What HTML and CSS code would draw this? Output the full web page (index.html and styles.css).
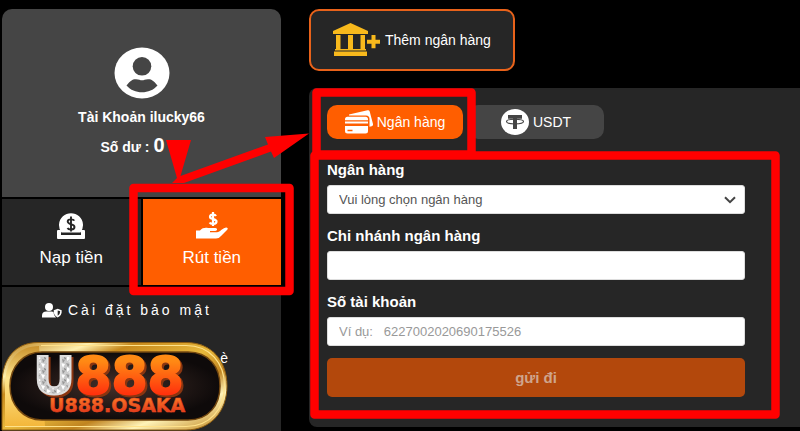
FILE: index.html
```html
<!DOCTYPE html>
<html lang="vi">
<head>
<meta charset="utf-8">
<meta name="viewport" content="width=device-width, initial-scale=1">
<title>Rút tiền</title>
<link rel="stylesheet" href="styles.css">
</head>
<body>
<div class="layout">
  <aside class="sidebar">
    <section class="profile">
      <svg class="avatar" viewBox="0 0 56 52" aria-hidden="true">
        <ellipse cx="28" cy="26" rx="27.5" ry="25.5" fill="#fff"/>
        <circle cx="28" cy="19.300" r="9.300" fill="#454545"/>
        <path d="M12.500 38.500C16.500 33.500 19 32 22 32.300C25 32.600 26 33.300 28 33.300C30 33.300 31 32.600 34 32.300C37 32 39.500 33.500 43.500 38.500C39.500 43 34 45.300 28 45.300C22 45.300 16.500 43 12.500 38.500Z" fill="#454545"/>
      </svg>
      <p class="account">Tài Khoản ilucky66</p>
      <p class="balance">Số dư : <span class="amount">0</span></p>
    </section>
    <nav class="actions">
      <a class="action" href="#nap">
        <svg class="action-icon" viewBox="0 0 32 28" aria-hidden="true">
          <path d="M3 18h3v5h20v-5h3q1 0 1 1v7q0 1-1 1H3q-1 0-1-1v-7q0-1 1-1z" fill="#fff"/>
          <path d="M6.500 20.500A12 12 0 1 1 25.500 20.500Z" fill="#fff"/>
          <path d="M6 22.300h20" stroke="#262626" stroke-width="1"/>
          <path d="M19.300 8.700C18.500 7 12.700 6.500 12.700 9.600C12.700 13 19.500 11.500 19.500 15C19.500 18.300 13.500 18 12.500 16M16 4.500v15" fill="none" stroke="#262626" stroke-width="1.900"/>
        </svg>
        <span>Nạp tiền</span>
      </a>
      <a class="action active" href="#rut">
        <svg class="action-icon" viewBox="0 0 32 28" aria-hidden="true">
          <path d="M20 4C19 2.200 14 2 14 5C14 7.700 20.500 6.500 20.500 9.500C20.500 12.500 14.700 12.500 13.700 10.500M17 0v14" fill="none" stroke="#fff" stroke-width="2.200"/>
          <path d="M0 18.500h4c2-2.500 5-3 8-2.500h7.500q2 .300 1.500 1.800q-.500 1.200-2 1.200h-5v1.200h7c3 0 6-4.700 9.500-4.700q2.300.800.500 2.500l-6 6q-2 2.500-5 2.500H0z" fill="#fff"/>
        </svg>
        <span>Rút tiền</span>
      </a>
    </nav>
    <nav class="menu">
      <a class="menu-item" href="#bao-mat">
        <svg class="menu-icon" viewBox="0 0 20 15" aria-hidden="true">
          <circle cx="7" cy="4" r="4" fill="#fff"/>
          <path d="M0 14.500v-2q0-4 4.500-4h5q1.500 0 2 .500q0 3.500 2.500 5.500z" fill="#fff"/>
          <path d="M15.700 5.800l4 1.400q.300 5.300-4 7.300q-4.300-2-4-7.300z" fill="#fff"/>
          <path d="M15.700 7.500v5.300q2.500-1.500 2.500-4.500z" fill="#262626"/>
        </svg>
        <span>Cài đặt bảo mật</span>
      </a>
      <a class="menu-item menu-item-end" href="#ban-be">è</a>
    </nav>
  </aside>

  <main class="main">
    <button class="add-bank" type="button">
      <svg class="bank-icon" viewBox="0 0 48 34" aria-hidden="true">
        <g fill="#f8b91c">
          <path d="M18.500 0L36 8v3H1V8z"/>
          <path d="M4 12h4.500v14H4zM16 12h5v14h-5zM28.500 12H33v14h-4.500z"/>
          <path d="M3 26h31v1.500H3zM2 28.500h33V33H2z"/>
          <path d="M39.500 12h4v4.700H48v4h-4.500v4.600h-4v-4.600H35v-4h4.500z"/>
        </g>
      </svg>
      <span>Thêm ngân hàng</span>
    </button>

    <section class="panel">
      <div class="tabs">
        <button class="tab active" type="button">
          <svg class="tab-icon" viewBox="0 0 28 28" aria-hidden="true">
            <path d="M4 6.500L22.500 2.300q1.700-.400 2.200 1.200L28 16q.400 1.500-1.300 2.200l-2.200.600V11q0-3.500-3.500-3.500H4z" fill="#fff"/>
            <path d="M2.500 8.700h18q2.500 0 2.500 2.500v1H0v-1q0-2.500 2.500-2.500zM0 13.400h23v2H0zM0 18h23v5q0 2.500-2.500 2.500h-18Q0 25.500 0 23z" fill="#fff"/>
            <path d="M2.500 22.500h5" stroke="#ff5e00" stroke-width="1.500"/>
          </svg>
          <span>Ngân hàng</span>
        </button>
        <button class="tab" type="button">
          <svg class="tab-icon" viewBox="0 0 28 28" aria-hidden="true">
            <ellipse cx="14" cy="14" rx="14" ry="13" fill="#fff"/>
            <path d="M7 7h14v3.700h-5V21h-4V10.700H7z" fill="#454545"/>
            <ellipse cx="14" cy="13.600" rx="8.500" ry="2.300" fill="none" stroke="#454545" stroke-width="1.100"/>
          </svg>
          <span>USDT</span>
        </button>
      </div>

      <form class="form">
        <div class="field">
          <label for="bank">Ngân hàng</label>
          <div class="select-wrap">
            <select id="bank" class="control"><option>Vui lòng chọn ngân hàng</option></select>
            <svg class="chevron" viewBox="0 0 12 8" aria-hidden="true"><path d="M1 1.200l5 5l5-5" fill="none" stroke="#444" stroke-width="2"/></svg>
          </div>
        </div>
        <div class="field">
          <label for="branch">Chi nhánh ngân hàng</label>
          <input id="branch" class="control" type="text">
        </div>
        <div class="field">
          <label for="number">Số tài khoản</label>
          <input id="number" class="control" type="text" placeholder="Ví dụ:&nbsp;&nbsp;&nbsp;6227002020690175526">
        </div>
        <button class="submit" type="submit" disabled>gửi đi</button>
      </form>
    </section>
  </main>
</div>

<svg class="marks" width="800" height="431" viewBox="0 0 800 431" aria-hidden="true">
  <g fill="none" stroke="#f00" stroke-width="8.500" stroke-linejoin="round">
    <rect x="133.500" y="188" width="156" height="103"/>
    <rect x="316.500" y="92.500" width="155" height="62"/>
    <rect x="314.500" y="155.500" width="461" height="259"/>
  </g>
  <path d="M166 140h25l-10.500 36L268 144.500l-3-7.500L309 133.500L274 158l-3-6.500L184 183h-12l5-5z" fill="#f00"/>
</svg>

<svg class="brand" width="227" height="90" viewBox="0 0 227 90" role="img" aria-label="U888.OSAKA">
  <defs>
    <linearGradient id="gold" x1="0" y1="0" x2="1" y2="1">
      <stop offset="0" stop-color="#b87a12"/>
      <stop offset=".2" stop-color="#fff0ae"/>
      <stop offset=".3" stop-color="#c88a1c"/>
      <stop offset=".5" stop-color="#e8b93c"/>
      <stop offset=".65" stop-color="#c08420"/>
      <stop offset=".78" stop-color="#fff3b8"/>
      <stop offset="1" stop-color="#bd8118"/>
    </linearGradient>
    <linearGradient id="corner" x1="0" y1="0" x2="0" y2="1">
      <stop offset="0" stop-color="#c9912b"/>
      <stop offset=".4" stop-color="#ffe58d"/>
      <stop offset="1" stop-color="#f3b73b"/>
    </linearGradient>
    <radialGradient id="dark">
      <stop offset="0" stop-color="#44302a"/>
      <stop offset="1" stop-color="#0e0a0a"/>
    </radialGradient>
    <linearGradient id="fire" x1="0" y1="0" x2="0" y2="1">
      <stop offset=".25" stop-color="#ff8a14"/>
      <stop offset=".85" stop-color="#ff2a0c"/>
    </linearGradient>
    <linearGradient id="ember" x1="0" y1="0" x2="0" y2="1">
      <stop offset=".2" stop-color="#fa7526"/>
      <stop offset=".9" stop-color="#e0341a"/>
    </linearGradient>
    <pattern id="diamond" width="10" height="11" patternUnits="userSpaceOnUse">
      <rect width="10" height="11" fill="#ccc"/>
      <path d="M0 0l4 1L2 5zM6 4l4 2l-4 3z" fill="#fff"/>
      <path d="M5 0l4 1L7 4zM1 7l3 1L2 11z" fill="#999"/>
      <path d="M3 5l2 1l-1 2z" fill="#777"/>
      <path d="M7 9l3-1v3z" fill="#eee"/>
    </pattern>
  </defs>
  <path d="M1 89V43C1 17 15 1.500 37 1.500H185C211 1.500 226 20 226 45C226 70 210 89 185 89Z" fill="url(#gold)" stroke="#8e5d10" stroke-width="1"/>
  <path d="M4 85V44C4 20 17 5 38 5L44 85Z" fill="url(#corner)"/>
  <path d="M4 85.500H185C209 85.500 223.500 68 223.500 45C223.500 22 209 4.500 185 4.500H40" fill="none" stroke="#ffe28a" stroke-width="1.200"/>
  <path d="M41 11H187C208 11 219 26 219 45C219 64 208 79 187 79H41C22 79 9 64 9 45C9 26 22 11 41 11Z" fill="url(#dark)" stroke="#744810" stroke-width="1.500"/>
  <text class="brand-name" x="32" y="53"><tspan fill="url(#diamond)" stroke="#ddd" stroke-width="2">U</tspan><tspan fill="url(#fire)" stroke="url(#fire)" stroke-width="2">888</tspan></text>
  <text class="brand-site" x="48" y="71" fill="url(#ember)" stroke="#ed4b20" stroke-width=".5">U888.OSAKA</text>
</svg>
</body>
</html>
```

FILE: styles.css
```css
* { box-sizing: border-box; }

body {
  margin: 0;
  background: #000;
  color: #fff;
  font-family: "Liberation Sans", Arial, sans-serif;
  font-size: 14px;
  position: relative;
  overflow: hidden;
}

button, input, select { font: inherit; color: inherit; }
button { cursor: pointer; border: 0; }
a { color: inherit; text-decoration: none; }
p { margin: 0; }

.layout {
  display: grid;
  grid-template-columns: 279px minmax(0, 1fr);
  gap: 28px;
  min-height: 100vh;
  padding: 9px 0 0 2px;
}

/* Sidebar */
.sidebar {
  display: flex;
  flex-direction: column;
  gap: 2px;
}

.profile {
  display: flex;
  flex-direction: column;
  align-items: center;
  padding: 38px 0 36px;
  background: #454545;
  border-radius: 10px 10px 0 0;
  font-weight: bold;
}

.avatar { width: 56px; height: 52px; }
.account { margin-top: 8px; line-height: 20px; }
.balance { margin-top: 4px; line-height: 28px; padding-right: 18px; }
.amount { font-size: 20px; }

.actions {
  display: grid;
  grid-template-columns: 1fr 1fr;
  gap: 2px;
}

.action {
  display: flex;
  flex-direction: column;
  align-items: center;
  gap: 8px;
  padding: 13px 0 17px;
  background: #262626;
  font-size: 17px;
  line-height: 20px;
}

.action.active { background: #ff5e00; }
.action-icon { width: 32px; height: 28px; }

.menu {
  flex: 1;
  display: flex;
  flex-direction: column;
  gap: 28px;
  padding: 13px 0 0 40px;
  background: #262626;
}

.menu-item {
  display: flex;
  align-items: center;
  gap: 6px;
  line-height: 20px;
  letter-spacing: 3px;
}

.menu-item-end { justify-content: flex-end; padding-right: 50px; }
.menu-icon { width: 20px; height: 15px; }

/* Main column */
.add-bank {
  display: flex;
  align-items: center;
  gap: 5px;
  height: 62px;
  padding: 0 22px 0 21px;
  background: #262626;
  border: 2px solid #e8621a;
  border-radius: 10px;
}

.bank-icon { width: 48px; height: 34px; }

.panel {
  margin-top: 17px;
  padding: 17px 55px 30px 18px;
  background: #262626;
  border-radius: 8px 0 0 8px;
}

.tabs { display: flex; gap: 5px; }

.tab {
  display: flex;
  align-items: center;
  justify-content: center;
  gap: 4px;
  width: 136px;
  height: 34px;
  padding: 0;
  background: #454545;
  border-radius: 10px;
}

.tab.active { background: #ff5e00; }
.tab-icon { width: 28px; height: 28px; }

.form {
  display: flex;
  flex-direction: column;
  gap: 12px;
  margin-top: 21px;
}

.field {
  display: flex;
  flex-direction: column;
  gap: 5px;
}

.field label {
  font-size: 15px;
  font-weight: bold;
  line-height: 20px;
}

.select-wrap { display: grid; position: relative; }

.control {
  appearance: none;
  width: 100%;
  height: 29px;
  padding: 0 11px;
  background: #fff;
  border: 1px solid #ddd;
  border-radius: 3px;
  color: #555;
  font-size: 13px;
}

.control::placeholder { color: #999; opacity: 1; }

.chevron {
  position: absolute;
  top: 11px;
  right: 9px;
  width: 12px;
  height: 8px;
  pointer-events: none;
}

.submit {
  height: 39px;
  background: #b3480c;
  border-radius: 5px;
  color: #cfa58c;
  font-size: 15px;
  font-weight: bold;
}

/* Overlays */
.marks {
  position: absolute;
  top: 0;
  left: 0;
  pointer-events: none;
}

.brand {
  position: absolute;
  top: 341px;
  left: 1px;
}

.brand-name, .brand-site {
  font-family: "DejaVu Sans", sans-serif;
  font-weight: bold;
}

.brand-name {
  font-size: 52px;
  filter: drop-shadow(2px 2px 0 #8a3510);
}

.brand-site { font-size: 19px; }
```
